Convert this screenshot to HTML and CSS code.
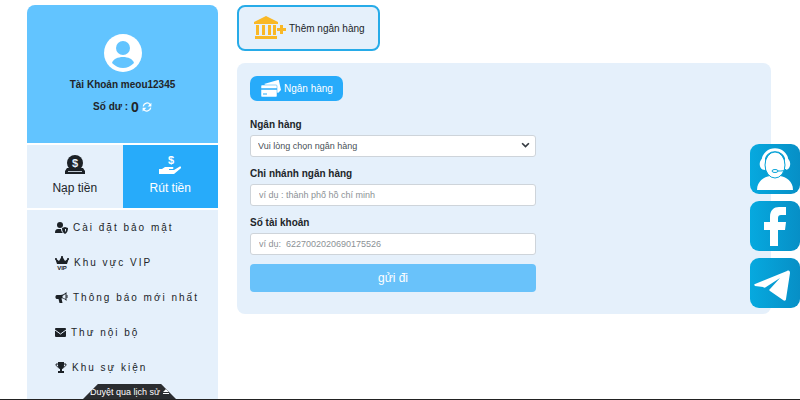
FILE: index.html
```html
<!DOCTYPE html>
<html lang="vi">
<head>
    <meta charset="UTF-8">
    <meta name="viewport" content="width=device-width, initial-scale=1.0">
    <title>Rút tiền</title>
    <link rel="stylesheet" href="styles.css">
</head>
<body>
    <div class="page">
        <aside class="sidebar">
            <div class="profile">
                <svg class="avatar" viewBox="0 0 38 38">
                    <circle cx="19" cy="19" r="19" fill="#fff"/>
                    <circle cx="19" cy="14" r="7" fill="#62c4ff"/>
                    <path d="M8 29c1-4 6-6 11-6s10 2 11 6c-3 3-7 5-11 5s-8-2-11-5z" fill="#62c4ff"/>
                </svg>
                <div class="username">Tài Khoản meou12345</div>
                <div class="balance">
                    Số dư : <span class="amount">0</span>
                    <button class="refresh" type="button" aria-label="Làm mới">
                        <svg viewBox="0 0 16 16" fill="none" stroke="#fff" stroke-width="2">
                            <path d="M2 7c1-6 8-7 11-3M14 9c-1 6-8 7-11 3"/>
                            <path d="M15 1v6H9zM1 15V9h6z" fill="#fff" stroke="none"/>
                        </svg>
                    </button>
                </div>
            </div>

            <nav class="tabs">
                <a class="tab" href="#">
                    <svg viewBox="0 0 20 20">
                        <path d="M2 13h16l2 3v3H0v-3z" fill="#1c2126"/>
                        <circle cx="10" cy="8" r="8" fill="#1c2126"/>
                        <path d="M3 16.500h14" stroke="#e5f0fb" stroke-width=".8"/>
                        <text x="10" y="12" class="coin">$</text>
                    </svg>
                    Nạp tiền
                </a>
                <a class="tab active" href="#">
                    <svg viewBox="0 0 22 20" fill="#fff">
                        <text x="12" y="9" class="dollar">$</text>
                        <path d="M0 14h3l3-2h7c2 0 2 2 0 2h-3v1h5l5-3c2-1 3 0 1 2l-6 5H0z"/>
                    </svg>
                    Rút tiền
                </a>
            </nav>

            <ul class="menu">
                <li><a href="#">
                    <svg viewBox="0 0 13 12" width="13" height="12">
                        <circle cx="5" cy="3" r="3"/>
                        <path d="M0 11c0-3 1-4 3-4h3c0 2 1 3 2 4z"/>
                        <path d="M10 5l3 1c0 3-1 5-3 6-2-1-3-3-3-6z"/>
                        <path d="M10 7v3c1-1 1-2 1-3z" fill="#e5f0fb"/>
                    </svg>
                    Cài đặt bảo mật
                </a></li>
                <li><a href="#">
                    <svg viewBox="0 0 14 14" width="14" height="14">
                        <path d="M2 8L0 2l4 3 3-5 3 5 4-3-2 6z"/>
                        <circle cx="1" cy="3" r="1"/><circle cx="7" cy="1" r="1"/><circle cx="13" cy="3" r="1"/>
                        <text x="7" y="14" class="vip">VIP</text>
                    </svg>
                    Khu vực VIP
                </a></li>
                <li><a href="#">
                    <svg viewBox="0 0 12 11" width="13" height="11">
                        <path d="M1 3h4c2 0 4-1 6-3v9C9 7 7 6 6 6.500L7 11H4L3 7H1L0 6V4zM7 4v1.500l3 1.500V2z" fill-rule="evenodd"/>
                        <path d="M11 3h1v3h-1z"/>
                    </svg>
                    Thông báo mới nhất
                </a></li>
                <li><a href="#">
                    <svg viewBox="0 0 11 9" width="11" height="9">
                        <rect width="11" height="9" rx="1"/>
                        <path d="M0 2l5.500 4L11 2" fill="none" stroke="#e5f0fb"/>
                    </svg>
                    Thư nội bộ
                </a></li>
                <li><a href="#">
                    <svg viewBox="0 0 12 11" width="12" height="11">
                        <path d="M3 0h6v3c0 3-1 4-2 4v2h2v2H3V9h2V7C4 7 3 6 3 3z"/>
                        <path d="M3 2H1c0 2 1 3 3 3M9 2h2c0 2-1 3-3 3" fill="none" stroke="#1c2126"/>
                    </svg>
                    Khu sự kiện
                </a></li>
            </ul>
        </aside>

        <main class="content">
            <button class="add-bank" type="button">
                <svg viewBox="0 0 32 24" width="32" height="24" fill="#f9b826">
                    <path d="M12 0l12 6v2H0V6zM2 9h3v10H2zM8 9h3v10H8zM14 9h3v10h-3zM19 9h3v10h-3zM1 20h22v3H1z"/>
                    <path d="M26 9h3v3h3v3h-3v3h-3v-3h-3v-3h3z"/>
                </svg>
                Thêm ngân hàng
            </button>

            <section class="panel">
                <button class="bank-tab" type="button">
                    <svg viewBox="0 0 20 17" width="20" height="17">
                        <path d="M3 4l14-4c1 0 1 0 1 1l2 9-3 3" fill="#fff"/>
                        <rect x="0" y="5" width="16" height="12" rx="1" fill="#fff" stroke="#27abfa" stroke-width=".5"/>
                        <path d="M0 9h16" stroke="#27abfa" stroke-width="1.500"/>
                        <path d="M2 14h4" stroke="#27abfa"/>
                    </svg>
                    Ngân hàng
                </button>

                <form class="bank-form">
                    <label for="bank">Ngân hàng</label>
                    <div class="select-box">
                        <select id="bank">
                            <option>Vui lòng chọn ngân hàng</option>
                        </select>
                        <svg class="arrow" viewBox="0 0 8 6"><path d="M1 1l3 3 3-3" fill="none" stroke="#343a40" stroke-width="1.500"/></svg>
                    </div>

                    <label for="branch">Chi nhánh ngân hàng</label>
                    <input id="branch" type="text" placeholder="ví dụ : thành phố hồ chí minh">

                    <label for="account">Số tài khoản</label>
                    <input id="account" type="text" placeholder="ví dụ:&nbsp; 6227002020690175526">

                    <button class="submit" type="submit">gửi đi</button>
                </form>
            </section>
        </main>
    </div>

    <div class="contacts">
        <a href="#" aria-label="Hỗ trợ">
            <svg viewBox="0 0 50 50">
                <path d="M7 46c0-9 7-13 13-14h10c6 1 13 5 13 14z" fill="#fff"/>
                <path d="M13 17C14 2 36 2 37 17" fill="none" stroke="#fff" stroke-width="3"/>
                <path d="M15 14c-7 0-7 12 0 12zM35 14c7 0 7 12 0 12z" fill="#fff"/>
                <ellipse cx="25" cy="21" rx="10" ry="13" fill="#fff" stroke="#08a4d8"/>
                <path d="M36 25c-1 2-4 2-8 2" fill="none" stroke="#08a4d8"/>
                <ellipse cx="25" cy="27" rx="3" ry="1.500" fill="#fff" stroke="#08a4d8"/>
            </svg>
        </a>
        <a href="#" aria-label="Facebook">
            <svg viewBox="0 0 50 50">
                <path d="M36 6v8h-5c-2 0-3 1-3 3v4h8l-1 8h-7v16h-8V29h-6v-8h6v-5c0-7 4-10 9-10z" fill="#fff"/>
            </svg>
        </a>
        <a href="#" aria-label="Telegram">
            <svg viewBox="0 0 50 50">
                <path d="M5 26l32-13c2-1 3 0 3 2l-4 26c0 2-2 2-3 1L20 33c-1-1-1-1 0-2l10-11-14 9c-1 1-2 1-3 0l-8-1c-1-1-1-2 0-2z" fill="#fff"/>
            </svg>
        </a>
    </div>

    <div class="history">
        <button type="button">
            Duyệt qua lịch sử
            <svg viewBox="0 0 6 6" width="6" height="6" fill="#fff"><path d="M3 0l3 3H0zM0 4h6v1H0z"/></svg>
        </button>
    </div>
</body>
</html>
```
FILE: styles.css
```css
* {
    box-sizing: border-box;
}

body {
    margin: 0;
    font-family: "Liberation Sans", Arial, sans-serif;
    font-size: 10px;
    color: #212529;
    background-color: #fff;
}

a {
    color: inherit;
    text-decoration: none;
}

button {
    font-family: inherit;
    cursor: pointer;
}

.page {
    display: flex;
    align-items: stretch;
    gap: 19px;
    min-height: 100vh;
    padding: 5px 29px 0 27px;
}

/* sidebar */
.sidebar {
    display: flex;
    flex-direction: column;
    gap: 2px;
    flex: 0 0 191px;
}

.profile {
    display: flex;
    flex-direction: column;
    align-items: center;
    padding: 29px 0 28px;
    border-radius: 8px 8px 0 0;
    background-color: #62c4ff;
}

.avatar {
    width: 38px;
    height: 38px;
}

.username {
    margin-top: 6px;
    line-height: 14px;
    font-weight: bold;
}

.balance {
    display: flex;
    align-items: center;
    gap: 3px;
    margin-top: 7px;
    line-height: 16px;
    font-weight: bold;
}

.amount {
    font-size: 14px;
}

.refresh {
    display: flex;
    padding: 0;
    border: none;
    background: none;
}

.refresh svg {
    width: 10px;
    height: 10px;
}

.tabs {
    display: flex;
}

.tab {
    display: flex;
    flex: 1;
    flex-direction: column;
    align-items: center;
    gap: 4px;
    height: 63px;
    padding-top: 10px;
    font-size: 12px;
    line-height: 18px;
    background-color: #e5f0fb;
}

.tab svg {
    width: 22px;
    height: 20px;
}

.tab.active {
    color: #fff;
    background-color: #27abfa;
}

.coin,
.dollar {
    font-size: 11px;
    font-weight: bold;
    text-anchor: middle;
    fill: #e5f0fb;
}

.dollar {
    fill: #fff;
}

.menu {
    flex: 1;
    margin: 0;
    padding: 0;
    list-style: none;
    background-color: #e5f0fb;
}

.menu a {
    display: flex;
    align-items: center;
    gap: 5px;
    height: 35px;
    padding-left: 28px;
    letter-spacing: 2px;
}

.menu svg {
    fill: #1c2126;
    overflow: visible;
}

.vip {
    font-size: 6px;
    font-weight: bold;
    letter-spacing: 0;
    text-anchor: middle;
}

/* content */
.content {
    flex: 1;
}

.add-bank {
    display: flex;
    align-items: center;
    gap: 3px;
    height: 46px;
    padding: 0 13px 0 15px;
    border: 2px solid #27abe8;
    border-radius: 8px;
    font-size: 10px;
    color: #212529;
    background-color: #e5f0fb;
}

.panel {
    margin-top: 12px;
    padding: 13px 13px 22px;
    border-radius: 8px;
    background-color: #e5f0fb;
}

.bank-tab {
    display: flex;
    align-items: center;
    gap: 3px;
    height: 25px;
    padding: 0 10px 0 11px;
    border: none;
    border-radius: 7px;
    font-size: 10px;
    color: #fff;
    background-color: #27abfa;
}

.bank-form {
    display: flex;
    flex-direction: column;
    max-width: 286px;
    margin-top: 16px;
}

.bank-form label {
    margin-bottom: 2px;
    line-height: 16px;
    font-size: 10px;
    font-weight: bold;
}

.bank-form input,
.bank-form select {
    width: 100%;
    height: 22px;
    margin: 0 0 9px;
    padding: 0 8px;
    border: 1px solid #ced4da;
    border-radius: 3px;
    font-family: inherit;
    font-size: 9px;
    color: #495057;
    background-color: #fff;
}

.bank-form select {
    display: block;
    padding: 0 7px;
    appearance: none;
}

.bank-form input::placeholder {
    color: #8c9196;
}

.select-box {
    position: relative;
}

.arrow {
    position: absolute;
    top: 7px;
    right: 6px;
    width: 9px;
    height: 7px;
    pointer-events: none;
}

.submit {
    height: 28px;
    border: none;
    border-radius: 4px;
    font-size: 12px;
    color: #fff;
    background-color: #69c2fa;
}

/* floating contact links */
.contacts {
    position: fixed;
    top: 144px;
    right: 0;
    display: flex;
    flex-direction: column;
    gap: 7px;
}

.contacts a {
    width: 50px;
    height: 50px;
    border-radius: 9px;
    background: linear-gradient(90deg, #06a9df, #078fc6);
}

.contacts svg {
    display: block;
}

/* history bar */
.history {
    position: fixed;
    right: 0;
    bottom: 0;
    left: 0;
    padding-left: 83px;
    border-bottom: 1px solid #222;
}

.history button {
    display: flex;
    align-items: center;
    justify-content: center;
    gap: 3px;
    width: 93px;
    height: 15px;
    padding: 0;
    border: none;
    font-size: 9px;
    white-space: nowrap;
    color: #fff;
    background-color: #2b2d30;
    clip-path: polygon(16% 0, 84% 0, 100% 100%, 0 100%);
}
```
